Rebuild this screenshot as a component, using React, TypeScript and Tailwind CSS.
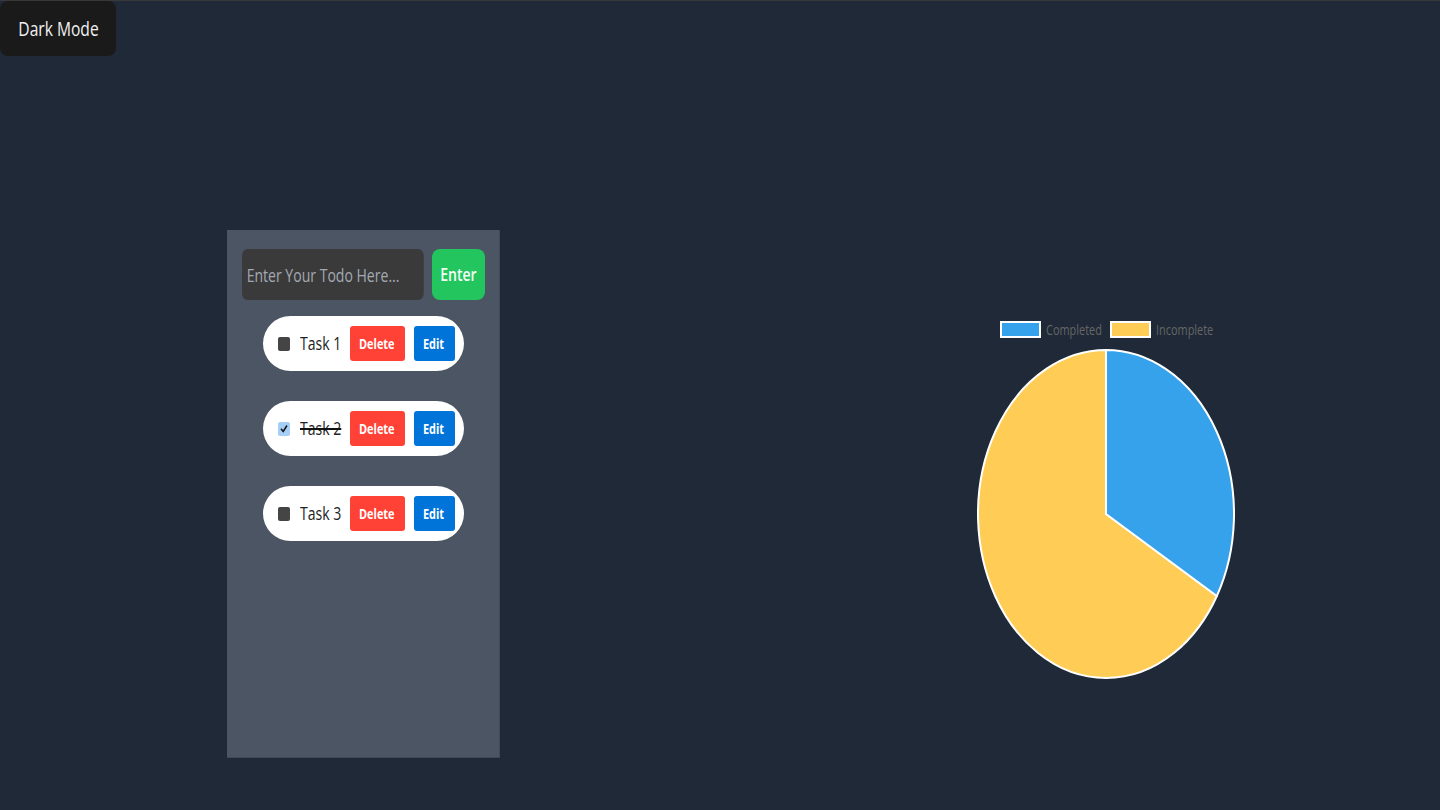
import React from "react";

type Todo = {
  id: number;
  text: string;
  done: boolean;
};

const todos: Todo[] = [
  { id: 1, text: "Task 1", done: false },
  { id: 2, text: "Task 2", done: true },
  { id: 3, text: "Task 3", done: false },
];

const font = {
  fontFamily: '"Open Sans", "Noto Sans", sans-serif',
};

// the screenshot is narrow-looking, so text is squeezed sideways
function Narrow({
  children,
  className = "",
  left = false,
}: {
  children: React.ReactNode;
  className?: string;
  left?: boolean;
}) {
  return (
    <span
      className={`inline-block scale-x-[0.78] whitespace-nowrap ${left ? "origin-left" : "origin-center"} ${className}`}
    >
      {children}
    </span>
  );
}

function TodoCheck({ checked }: { checked: boolean }) {
  if (checked) {
    return (
      <span className="flex h-[14px] w-[12px] shrink-0 items-center justify-center rounded-[2px] bg-[#a6cff7]">
        <svg width="8" height="9" viewBox="0 0 8 9">
          <path d="M1 4.8 L3.2 7.4 L7 1.5" fill="none" stroke="#111" strokeWidth="1.5" />
        </svg>
      </span>
    );
  }
  return <span className="h-[14px] w-[12px] shrink-0 rounded-[2px] bg-[#454545]" />;
}

function TodoItem({ todo }: { todo: Todo }) {
  return (
    <li className="flex h-[55px] w-[201px] items-center rounded-full bg-white pl-[15px]">
      <TodoCheck checked={todo.done} />
      <span className="ml-[10px] w-[40px] shrink-0 text-[18px] text-[#222]">
        <Narrow
          left
          className={
            todo.done
              ? "scale-x-[0.74] line-through decoration-[#111] decoration-[1.5px]"
              : "scale-x-[0.74]"
          }
        >
          {todo.text}
        </Narrow>
      </span>
      <button className="ml-[10px] flex h-[35px] w-[55px] shrink-0 items-center justify-center rounded-[3px] bg-[#ff4136] text-[14px] font-bold text-white">
        <Narrow>Delete</Narrow>
      </button>
      <button className="ml-[9px] flex h-[35px] w-[41px] shrink-0 items-center justify-center rounded-[3px] bg-[#0074d9] text-[14px] font-bold text-white">
        <Narrow>Edit</Narrow>
      </button>
    </li>
  );
}

function PieChart({ completed, total }: { completed: number; total: number }) {
  const cx = 130;
  const cy = 166;
  const rx = 128;
  const ry = 164;
  const angle = (completed / total) * Math.PI * 2;
  const ex = cx + rx * Math.sin(angle);
  const ey = cy - ry * Math.cos(angle);
  const large = angle > Math.PI ? 1 : 0;

  return (
    <svg width="260" height="332" viewBox="0 0 260 332">
      <path
        d={`M${cx} ${cy} L${cx} ${cy - ry} A${rx} ${ry} 0 ${1 - large} 0 ${ex} ${ey} Z`}
        fill="#ffcd56"
        stroke="#fff"
        strokeWidth="2"
        strokeLinejoin="round"
      />
      <path
        d={`M${cx} ${cy} L${cx} ${cy - ry} A${rx} ${ry} 0 ${large} 1 ${ex} ${ey} Z`}
        fill="#36a2eb"
        stroke="#fff"
        strokeWidth="2"
        strokeLinejoin="round"
      />
    </svg>
  );
}

function LegendItem({
  color,
  label,
  width,
}: {
  color: string;
  label: string;
  width: string;
}) {
  return (
    <div className="flex items-center gap-[5px]">
      <span className={`h-[17px] w-[41px] border-2 border-white ${color}`} />
      <span className={`text-[14px] text-[#666] ${width}`}>
        <Narrow left>{label}</Narrow>
      </span>
    </div>
  );
}

export default function App() {
  const completed = todos.filter((t) => t.done).length;

  return (
    <div className="min-h-screen border-t border-[#383838] bg-[#1f2937]" style={font}>
      <button className="flex h-[55px] w-[116px] items-center justify-center rounded-[8px] bg-[#1a1a1a] text-[20px] font-medium text-[#f1f1f1]">
        <Narrow className="scale-x-[0.74]">Dark Mode</Narrow>
      </button>

      <div className="flex pl-[227px] pt-[174px]">
        <section className="flex h-[528px] w-[273px] flex-col items-center border-b border-r border-[#404958] bg-[#4b5563] pt-[19px]">
          <div className="flex w-[243px] gap-[8px]">
            <div className="h-[51px] w-[182px] shrink-0">
              <input
                placeholder="Enter Your Todo Here..."
                className="h-[51px] w-[233px] origin-left scale-x-[0.78] rounded-[7px] bg-[#3a3a3a] pl-[6px] text-[18px] text-white outline-none placeholder:text-[#a3a9b3]"
              />
            </div>
            <button className="flex h-[51px] w-[53px] items-center justify-center rounded-[8px] bg-[#22c55e] text-[18px] font-semibold text-[#f4fff6]">
              <Narrow className="scale-x-[0.74]">Enter</Narrow>
            </button>
          </div>
          <ul className="mt-[16px] flex flex-col gap-[30px]">
            {todos.map((todo) => (
              <TodoItem key={todo.id} todo={todo} />
            ))}
          </ul>
        </section>

        <div className="ml-[476px] mt-[90px] flex w-[260px] flex-col items-center">
          <div className="flex h-[18px] items-center gap-[9px]">
            <LegendItem color="bg-[#36a2eb]" label="Completed" width="w-[55px]" />
            <LegendItem color="bg-[#ffcd56]" label="Incomplete" width="w-[57px]" />
          </div>
          <div className="mt-[10px]">
            <PieChart completed={completed} total={todos.length} />
          </div>
        </div>
      </div>
    </div>
  );
}
